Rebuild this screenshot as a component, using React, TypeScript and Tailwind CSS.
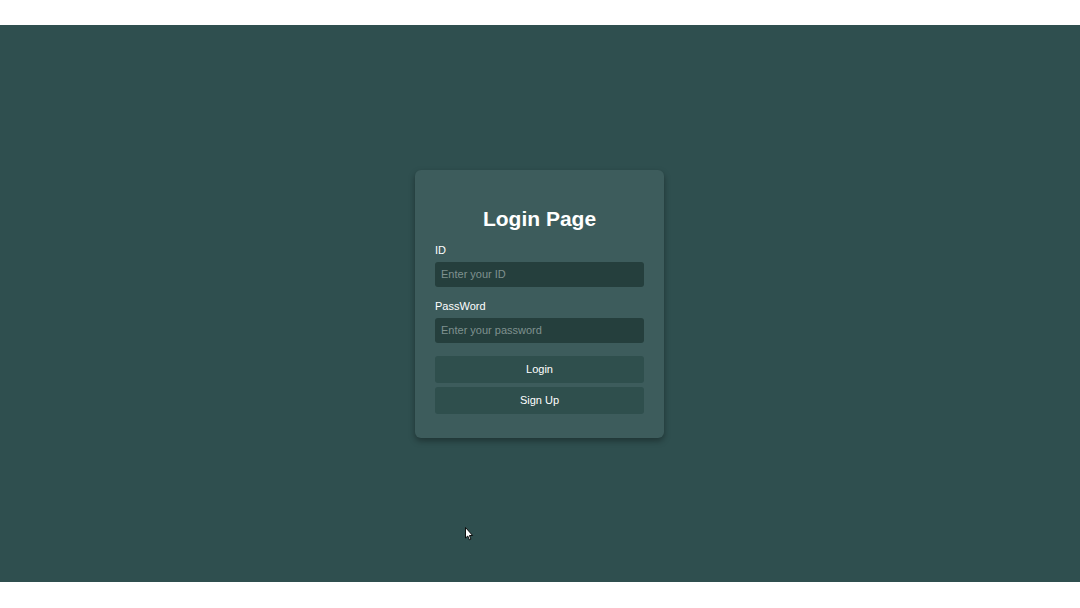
export default function App() {
  return (
    <div className="h-[608px] flex flex-col bg-white" style={{ fontFamily: '"Liberation Sans", Arial, sans-serif' }}>
      <div className="h-[25px]" />
      <div className="relative h-[557px] bg-[#2f4f4f] flex items-center justify-center">
        <div className="mr-[1px] w-[249px] rounded-md bg-[#3d5c5c] px-5 pt-9 pb-6 shadow-[0_3px_6px_rgba(0,0,0,0.35)]">
          <h2 className="text-center text-[21px] font-bold text-white leading-[25px]">Login Page</h2>
          <div className="mt-3 flex flex-col">
            <label className="text-[11px] leading-[14px] text-white">ID</label>
            <input
              placeholder="Enter your ID"
              className="mt-[5px] h-[25px] rounded-[3px] bg-[#253f3d] px-[6px] text-[11px] text-white placeholder:text-[#7f918f] outline-none"
            />
            <label className="mt-[12px] text-[11px] leading-[14px] text-white">PassWord</label>
            <input
              type="password"
              placeholder="Enter your password"
              className="mt-[5px] h-[25px] rounded-[3px] bg-[#253f3d] px-[6px] text-[11px] text-white placeholder:text-[#7f918f] outline-none"
            />
            <button className="mt-[13px] h-[27px] rounded-[3px] bg-[#2f4f4d] text-[11px] text-white">Login</button>
            <button className="mt-[4px] h-[27px] rounded-[3px] bg-[#2f4f4d] text-[11px] text-white">Sign Up</button>
          </div>
        </div>
        <svg className="absolute left-[465px] top-[502px]" width="9" height="14" viewBox="0 0 9 14">
          <path d="M0.5 0.5 L0.5 11 L2.8 9 L4.3 12.8 L5.9 12.1 L4.4 8.5 L7.6 8.5 Z" fill="#fff" stroke="#000" strokeWidth="0.9" />
        </svg>
      </div>
      <div className="flex-1" />
    </div>
  )
}
